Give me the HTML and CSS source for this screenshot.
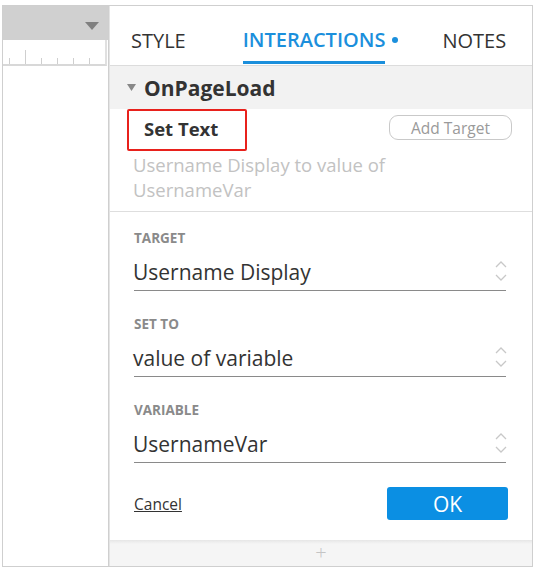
FILE: index.html
```html
<!DOCTYPE html>
<html>
<head>
<meta charset="utf-8">
<link rel="stylesheet" href="styles.css">
</head>
<body>
<div class="frame">
  <div class="left">
    <div class="left-head">
      <svg class="drop" width="14" height="8" viewBox="0 0 14 8"><path d="M0 0H14L7 8Z" fill="#808080"/></svg>
    </div>
    <div class="ruler">
      <span class="tick"></span><span class="tick tall"></span><span class="tick"></span><span class="tick"></span><span class="tick"></span><span class="tick"></span>
    </div>
    <div class="left-body"></div>
  </div>
  <div class="right">
    <div class="tabs">
      <div class="tab">STYLE</div>
      <div class="tab active">INTERACTIONS<span class="dot"></span></div>
      <div class="tab">NOTES</div>
    </div>
    <div class="event">
      <svg class="caret" width="9" height="7" viewBox="0 0 9 7"><path d="M0 0H9L4.5 7Z" fill="#888"/></svg>
      <span class="event-name">OnPageLoad</span>
    </div>
    <div class="action">
      <div class="action-top">
        <div class="action-name">Set Text</div>
        <button class="add-target">Add Target</button>
      </div>
      <div class="action-desc">Username Display to value of UsernameVar</div>
    </div>
    <div class="form">
      <div class="field">
        <div class="label">TARGET</div>
        <div class="select"><span>Username Display</span><svg class="spin" width="12" height="22" viewBox="0 0 12 22"><path d="M1 7L6 2L11 7M1 15L6 20L11 15" fill="none" stroke="#c8c8c8" stroke-width="1.3"/></svg></div>
      </div>
      <div class="field">
        <div class="label">SET TO</div>
        <div class="select"><span>value of variable</span><svg class="spin" width="12" height="22" viewBox="0 0 12 22"><path d="M1 7L6 2L11 7M1 15L6 20L11 15" fill="none" stroke="#c8c8c8" stroke-width="1.3"/></svg></div>
      </div>
      <div class="field">
        <div class="label">VARIABLE</div>
        <div class="select"><span>UsernameVar</span><svg class="spin" width="12" height="22" viewBox="0 0 12 22"><path d="M1 7L6 2L11 7M1 15L6 20L11 15" fill="none" stroke="#c8c8c8" stroke-width="1.3"/></svg></div>
      </div>
      <div class="buttons">
        <a class="cancel">Cancel</a>
        <button class="ok">OK</button>
      </div>
    </div>
    <div class="footer">+</div>
  </div>
</div>
</body>
</html>
```
FILE: styles.css
```css
* { box-sizing: border-box; }
html, body { margin: 0; padding: 0; background: #fff; }
body { font-family: "Open Sans", Lato, sans-serif; color: #333; }

.frame {
  margin: 5px 0 0 2px;
  width: 531px;
  height: 562px;
  border: 1px solid #cfcfcf;
  display: flex;
}

.left {
  width: 106px;
  border-right: 1px solid #cfcfcf;
  display: flex;
  flex-direction: column;
}
.left-head {
  height: 34px;
  background: #d0d0d0;
  display: flex;
  justify-content: flex-end;
  align-items: center;
  padding-right: 9px;
}
.drop { margin-top: 6px; }
.ruler {
  height: 26px;
  border-bottom: 2px solid #d8d8d8;
  border-right: 2px solid #e0e0e0;
  margin-right: 1px;
  display: flex;
  align-items: flex-end;
  padding-left: 6px;
  gap: 15px;
}
.tick { width: 1px; height: 6px; background: #cfcfcf; }
.tick.tall { height: 14px; }
.left-body { flex: 1; }

.right {
  flex: 1;
  border-left: 1px solid #e4e4e4;
  display: flex;
  flex-direction: column;
}
.tabs {
  height: 60px;
  border-bottom: 1px solid #dcdcdc;
  display: flex;
  align-items: flex-end;
  padding-left: 21px;
  gap: 57px;
}
.tab {
  font-size: 20px;
  line-height: 28px;
  color: #333;
  height: 38px;
  position: relative;
  white-space: nowrap;
}
.tab.active {
  color: #1b8fdc;
  font-weight: 600;
  border-bottom: 3px solid #1b8fdc;
  margin-bottom: 1px;
}
.dot {
  position: absolute;
  right: -13px;
  top: 11px;
  width: 6px;
  height: 6px;
  border-radius: 50%;
  background: #1b8fdc;
}

.event {
  height: 43px;
  background: #f2f2f2;
  display: flex;
  align-items: center;
  padding-left: 17px;
  gap: 8px;
}
.event-name { font-size: 21px; font-weight: 700; color: #333; }

.action {
  border-bottom: 1px solid #dedede;
  padding: 0 20px 8px 24px;
  height: 103px;
}
.action-top {
  display: flex;
  justify-content: space-between;
  align-items: center;
}
.action-name {
  font-size: 18.5px;
  font-weight: 700;
  border: 2px solid #e8211c;
  border-radius: 2px;
  width: 120px;
  height: 42px;
  margin-left: -7px;
  padding: 5px 0 0 15px;
  color: #333;
}
.add-target {
  font-family: inherit;
  font-size: 15.5px;
  color: #9a9a9a;
  background: #fff;
  border: 1px solid #c9c9c9;
  border-radius: 9px;
  width: 123px;
  height: 25px;
  padding: 0;
  margin-top: -5px;
}
.action-desc {
  font-size: 18.5px;
  color: #c2c2c2;
  line-height: 25px;
  width: 290px;
  margin-top: 1px;
  margin-left: -1px;
}

.form {
  flex: 1;
  padding: 17px 26px 0 24px;
}
.field { margin-bottom: 24px; }
.label {
  font-size: 13.5px;
  font-weight: 700;
  color: #8a8a8a;
  height: 20px;
}
.select {
  height: 42px;
  border-bottom: 1px solid #8a8a8a;
  display: flex;
  justify-content: space-between;
  align-items: center;
  font-size: 21px;
  color: #333;
  padding-top: 5px;
}
.select span { margin-left: -1px; }
.spin { margin-right: -1px; margin-top: -3px; }
.buttons {
  display: flex;
  justify-content: space-between;
  align-items: center;
  margin-top: 1px;
}
.cancel {
  font-size: 15.5px;
  color: #333;
  text-decoration: underline;
}
.ok {
  font-family: inherit;
  width: 121px;
  height: 33px;
  background: #0b8fe3;
  color: #fff;
  border: none;
  border-radius: 3px;
  font-size: 21px;
  padding: 0;
  margin-right: -2px;
}

.footer {
  height: 26px;
  background: linear-gradient(#e6e6e6, #f5f5f5 4px);
  color: #c4c4c4;
  font-size: 20px;
  line-height: 26px;
  text-align: center;
  font-weight: 300;
}
```
